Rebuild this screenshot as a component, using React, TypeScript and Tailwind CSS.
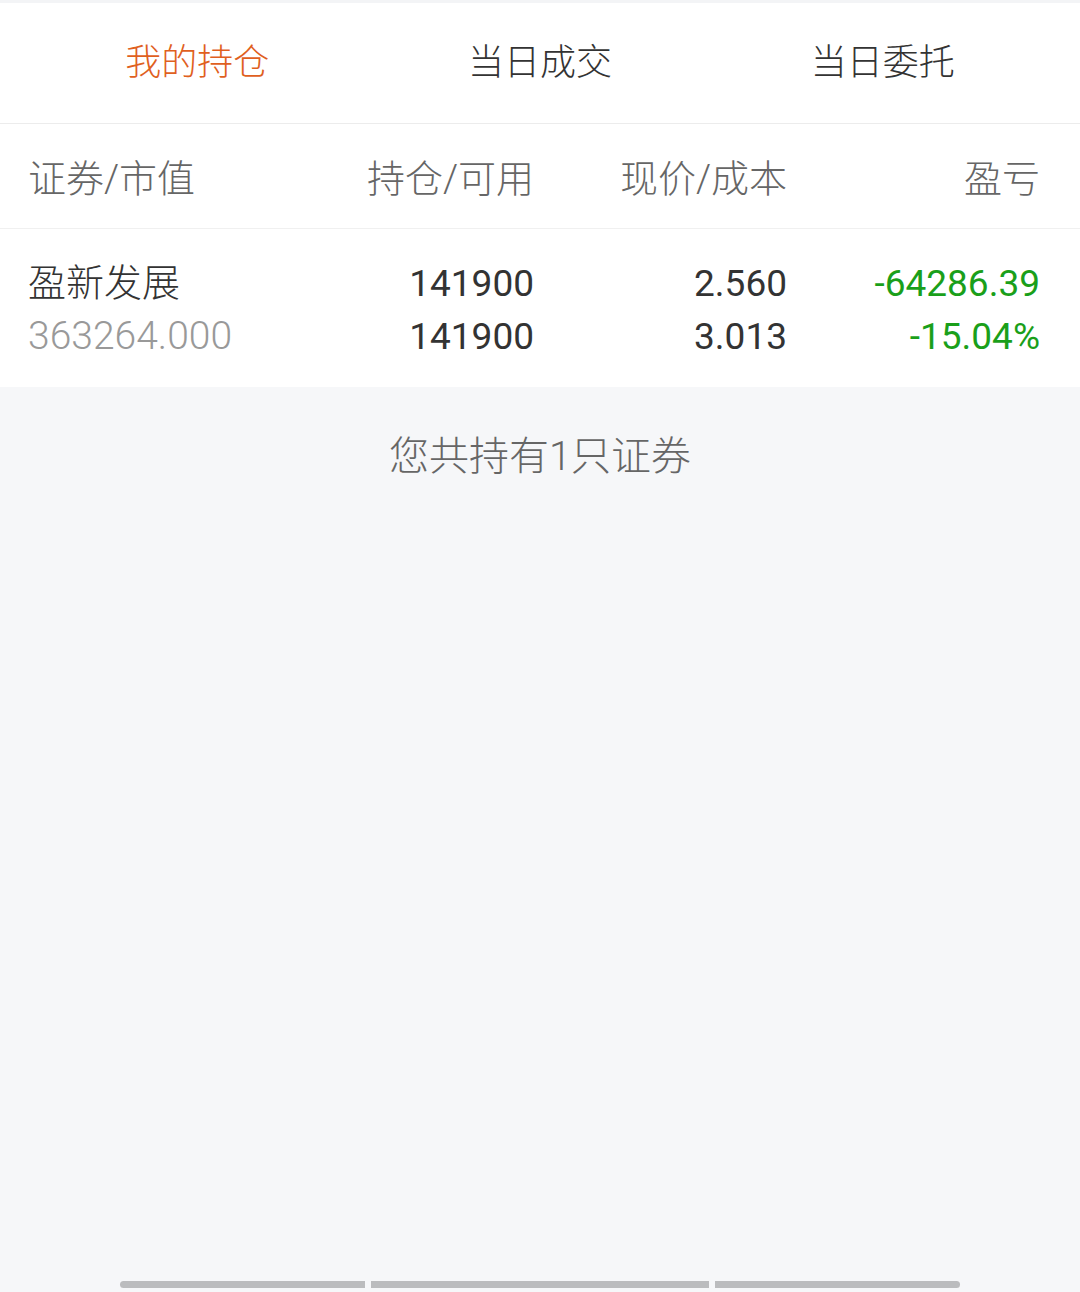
const tabs = ["我的持仓", "当日成交", "当日委托"];

export default function App() {
  return (
    <div className="min-h-[1292px] w-[1080px] bg-[#f6f7f9] flex flex-col font-['Roboto','Noto_Sans_CJK_SC',sans-serif]">
      <div className="h-[3px] bg-[#f3f4f6]" />
      <div className="bg-white">
        <div className="flex h-[121px] items-center px-[26px] border-b border-[#ececec]">
          {tabs.map((t, i) => (
            <div
              key={t}
              className={
                "flex-1 text-center text-[36px] font-light " +
                (i === 0 ? "text-[#e0601e]" : "text-[#333333]")
              }
            >
              {t}
            </div>
          ))}
        </div>

        <div className="grid grid-cols-4 h-[105px] items-center pl-[28px] pr-[40px] pt-[6px] border-b border-[#f0f0f0] text-[38px] font-light text-[#666666]">
          <div>证券/市值</div>
          <div className="text-right">持仓/可用</div>
          <div className="text-right">现价/成本</div>
          <div className="text-right">盈亏</div>
        </div>

        <div className="grid grid-cols-4 h-[158px] content-center pl-[28px] pr-[40px] pt-[4px] text-[37px] leading-[53px]">
          <div className="flex flex-col">
            <span className="text-[#333333] text-[38px] font-light">盈新发展</span>
            <span className="text-[#999999] text-[39px] font-light">363264.000</span>
          </div>
          <div className="flex flex-col text-right text-[#333333]">
            <span>141900</span>
            <span>141900</span>
          </div>
          <div className="flex flex-col text-right text-[#333333]">
            <span>2.560</span>
            <span>3.013</span>
          </div>
          <div className="flex flex-col text-right text-[#1a9f1a]">
            <span>-64286.39</span>
            <span>-15.04%</span>
          </div>
        </div>
      </div>

      <div className="flex-1 flex flex-col">
        <div className="text-center text-[40px] font-light text-[#666666] pt-[40px]">
          您共持有1只证券
        </div>
        <div className="flex-1" />
        <div className="flex justify-center gap-[6px] pb-[4px]">
          <div className="h-[7px] w-[245px] bg-[#bbbcbe] rounded-l-full" />
          <div className="h-[7px] w-[338px] bg-[#bbbcbe]" />
          <div className="h-[7px] w-[245px] bg-[#bbbcbe] rounded-r-full" />
        </div>
      </div>
    </div>
  );
}
